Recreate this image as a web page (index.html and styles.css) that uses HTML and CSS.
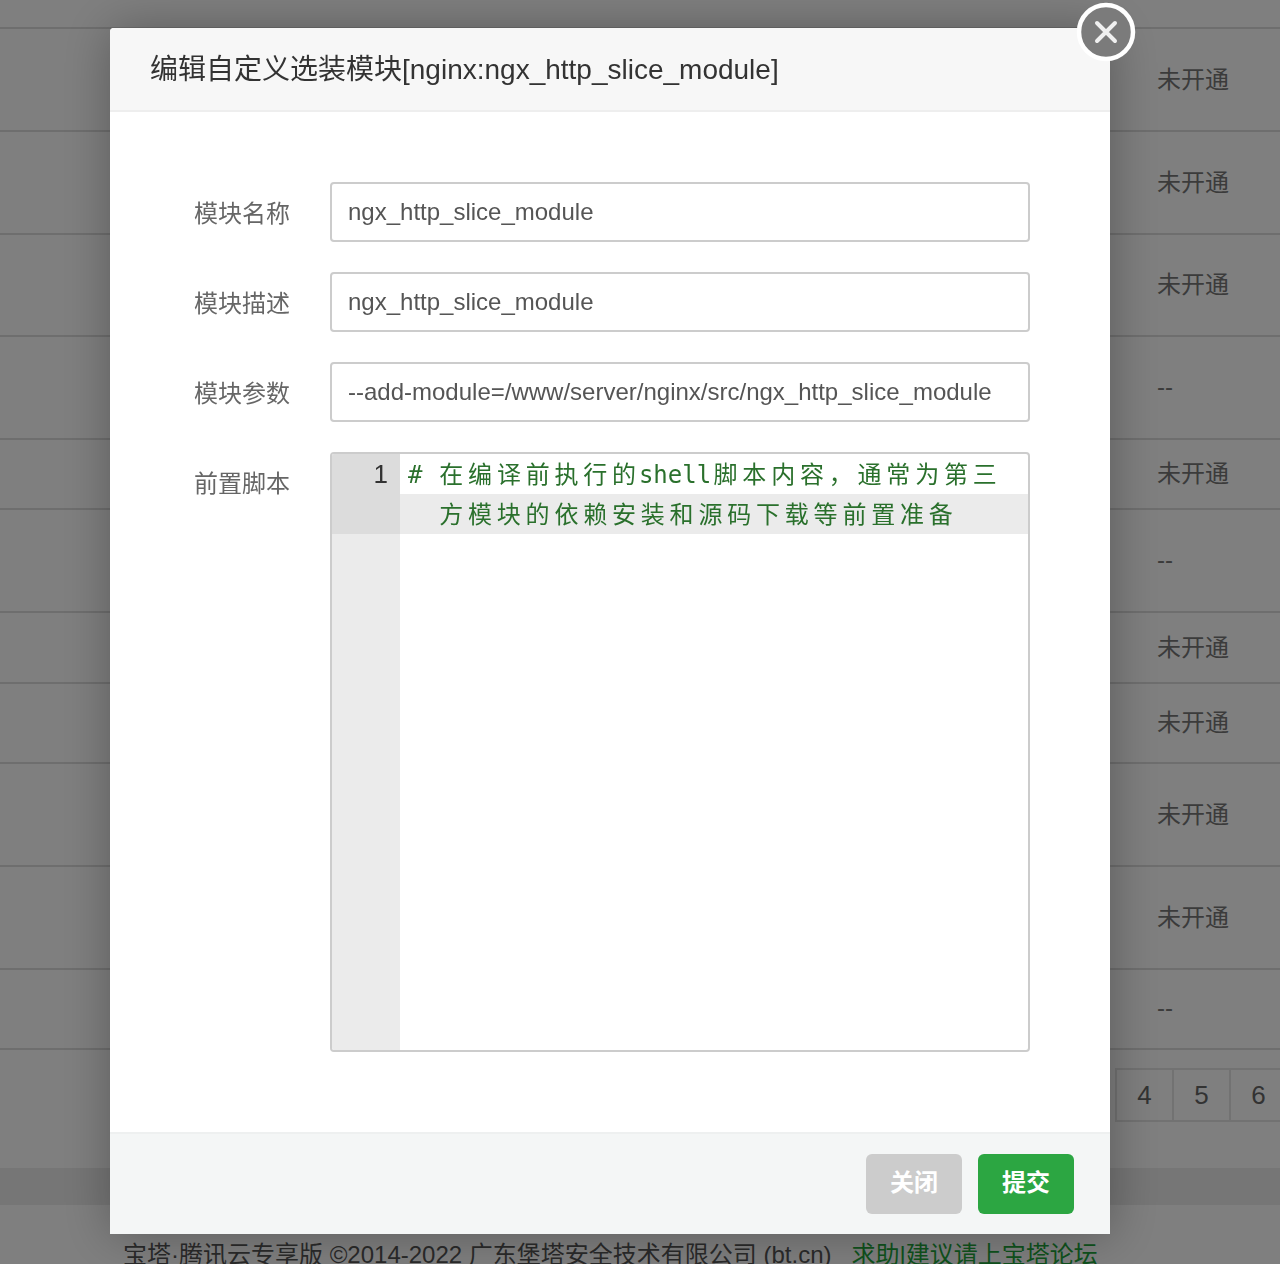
FILE: index.html
```html
<!DOCTYPE html>
<html lang="zh-CN">
<head>
<meta charset="utf-8">
<title>编辑自定义选装模块</title>
<link rel="stylesheet" href="styles.css">
</head>
<body>
<div class="page">
  <div class="table">
    <div class="row row-head"></div>
    <div class="row row-l">未开通</div>
    <div class="row row-l">未开通</div>
    <div class="row row-m">未开通</div>
    <div class="row row-l row-dash">--</div>
    <div class="row row-s">未开通</div>
    <div class="row row-l row-dash">--</div>
    <div class="row row-xs">未开通</div>
    <div class="row row-t">未开通</div>
    <div class="row row-l">未开通</div>
    <div class="row row-l">未开通</div>
    <div class="row row-t row-dash">--</div>
  </div>
  <div class="pager">
    <span class="pager-cell">4</span>
    <span class="pager-cell">5</span>
    <span class="pager-cell">6</span>
  </div>
  <div class="band"></div>
  <div class="copyright">
    <span>宝塔·腾讯云专享版 ©2014-2022 广东堡塔安全技术有限公司 (bt.cn)</span>
    <a class="copyright-link">求助|建议请上宝塔论坛</a>
  </div>
</div>

<div class="overlay">
  <div class="modal">
    <button class="close" type="button" aria-label="关闭">
      <svg width="60" height="60" viewBox="0 0 60 60">
        <circle cx="30" cy="30" r="27" fill="#7b7b7b" stroke="#fff" stroke-width="4.5"/>
        <path d="M21 21 L39 39 M39 21 L21 39" stroke="#f0f0f0" stroke-width="4" stroke-linecap="round" fill="none"/>
      </svg>
    </button>
    <div class="modal-title">编辑自定义选装模块[nginx:ngx_http_slice_module]</div>
    <div class="modal-body">
      <div class="field">
        <label class="field-label">模块名称</label>
        <div class="input">ngx_http_slice_module</div>
      </div>
      <div class="field">
        <label class="field-label">模块描述</label>
        <div class="input">ngx_http_slice_module</div>
      </div>
      <div class="field">
        <label class="field-label">模块参数</label>
        <div class="input">--add-module=/www/server/nginx/src/ngx_http_slice_module</div>
      </div>
      <div class="field">
        <label class="field-label">前置脚本</label>
        <div class="editor">
          <div class="gutter">
            <div class="gutter-active">1</div>
          </div>
          <div class="code">
            <div class="code-line"># <span class="cjk">在编译前执行的</span>shell<span class="cjk">脚本内容，通常为第三</span></div>
            <div class="code-line code-active"><span class="indent"></span><span class="cjk">方模块的依赖安装和源码下载等前置准备</span></div>
          </div>
        </div>
      </div>
    </div>
    <div class="modal-foot">
      <button class="btn btn-close" type="button">关闭</button>
      <button class="btn btn-submit" type="button">提交</button>
    </div>
  </div>
</div>
</body>
</html>
```
FILE: styles.css
```css
* { box-sizing: border-box; }
html, body { margin: 0; height: 100%; overflow: hidden; }
body {
  background: #fff;
  font-family: "Liberation Sans", "Noto Sans CJK SC", sans-serif;
  color: #666;
}
.page { height: 1264px; overflow: hidden; }
.row {
  display: flex;
  align-items: center;
  padding: 0 0 5px 1157px;
  border-bottom: 2px solid #ddd;
  font-size: 24px;
  color: #777;
}
.row-dash { padding-bottom: 2px; }
.row-head { height: 29px; }
.row-l { height: 103px; }
.row-m { height: 102px; }
.row-s { height: 70px; }
.row-xs { height: 71px; }
.row-t { height: 80px; }
.pager {
  display: flex;
  justify-content: flex-end;
  margin-top: 18px;
  margin-right: -6px;
}
.pager-cell {
  width: 57px;
  height: 54px;
  display: flex;
  align-items: center;
  justify-content: center;
  border: 2px solid #e4e4e4;
  border-right: 0;
  font-size: 26px;
  color: #666;
}
.band { height: 37px; margin-top: 46px; background: #ececec; }
.copyright {
  display: flex;
  gap: 20px;
  padding: 34px 0 0 123px;
  font-size: 24px;
  line-height: 32px;
  color: #555;
  white-space: nowrap;
}
.copyright-link { color: #20a53a; }

.overlay {
  position: fixed;
  inset: 0;
  background: rgba(0, 0, 0, .5);
  padding-top: 28px;
}
.modal {
  position: relative;
  width: 1000px;
  height: 1206px;
  margin-left: 110px;
  display: flex;
  flex-direction: column;
  background: #fff;
  border-radius: 4px 4px 0 0;
  box-shadow: 1px 1px 50px rgba(0, 0, 0, .3);
}
.close {
  position: absolute;
  top: -26px;
  right: -26px;
  width: 60px;
  height: 60px;
  padding: 0;
  border: 0;
  background: none;
  filter: blur(.6px);
}
.close svg { display: block; }
.modal-title {
  height: 84px;
  padding: 0 40px 4px;
  display: flex;
  align-items: center;
  background: #f7f7f7;
  border-bottom: 2px solid #eee;
  border-radius: 4px 4px 0 0;
  font-size: 28px;
  color: #333;
  white-space: nowrap;
}
.modal-body {
  flex: 1;
  padding-top: 70px;
  display: flex;
  flex-direction: column;
  gap: 30px;
}
.field { display: flex; align-items: flex-start; }
.field-label {
  width: 180px;
  height: 60px;
  margin-right: 40px;
  padding-top: 2px;
  text-align: right;
  font-size: 24px;
  line-height: 60px;
  color: #666;
}
.input {
  width: 700px;
  height: 60px;
  padding: 0 16px;
  display: flex;
  align-items: center;
  border: 2px solid #ccc;
  border-radius: 4px;
  font-size: 24px;
  color: #555;
  white-space: nowrap;
}
.editor {
  width: 700px;
  height: 600px;
  display: flex;
  border: 2px solid #ccc;
  border-radius: 4px;
  overflow: hidden;
}
.gutter { width: 68px; background: #ebebeb; }
.gutter-active {
  height: 80px;
  padding-right: 12px;
  text-align: right;
  background: #dcdcdc;
  font-size: 26px;
  line-height: 40px;
  color: #333;
}
.code {
  flex: 1;
  font-family: "DejaVu Sans Mono", "Noto Sans CJK SC", monospace;
  font-size: 24px;
  line-height: 38px;
  color: #2a702c;
}
.code-line { padding-left: 8px; white-space: pre; height: 40px; }
.code-active { background: #ebebeb; }
.indent { display: inline-block; width: 28.8px; }
.cjk {
  font-family: "Noto Sans CJK SC", sans-serif;
  letter-spacing: 4.8px;
  margin: 0 -2px 0 2.4px;
}
.modal-foot {
  height: 102px;
  display: flex;
  justify-content: flex-end;
  align-items: center;
  gap: 16px;
  padding-right: 36px;
  background: #f4f6f6;
  border-top: 2px solid #eef0f0;
}
.btn {
  width: 96px;
  height: 60px;
  padding: 0 0 8px;
  border: 0;
  border-radius: 6px;
  font-family: inherit;
  font-size: 24px;
  font-weight: 700;
  color: #fff;
}
.btn-close { background: #ccc; }
.btn-submit { background: #2ca642; }
```
